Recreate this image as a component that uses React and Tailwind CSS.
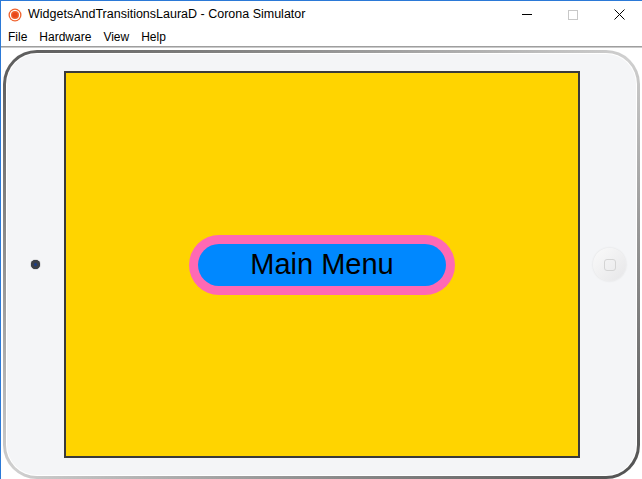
import React from 'react';

const TitleBar = () => (
  <div className="flex h-[28px] items-center bg-white">
    <svg width="14" height="14" viewBox="0 0 14 14" className="ml-[7px]">
      <circle cx="7" cy="7" r="6.5" fill="#f0622d" />
      <circle cx="7" cy="7" r="4.6" fill="none" stroke="#fff" strokeWidth="1.2" />
      <circle cx="7" cy="7" r="2.6" fill="#e8461a" />
    </svg>
    <span className="ml-[6px] text-[12.5px] text-black">WidgetsAndTransitionsLauraD - Corona Simulator</span>
    <div className="ml-auto flex h-full items-center">
      <div className="flex h-full w-[46px] items-center justify-center">
        <div className="h-px w-[10px] bg-black" />
      </div>
      <div className="flex h-full w-[46px] items-center justify-center">
        <div className="h-[10px] w-[10px] border border-[#c8c8c8]" />
      </div>
      <div className="flex h-full w-[46px] items-center justify-center">
        <svg width="11" height="11" viewBox="0 0 11 11">
          <path d="M0.5 0.5 L10.5 10.5 M10.5 0.5 L0.5 10.5" stroke="#000" strokeWidth="1" />
        </svg>
      </div>
    </div>
  </div>
);

const MenuBar = () => (
  <div className="flex h-[18px] items-center bg-white text-[12px] text-black">
    <span className="ml-[7px]">File</span>
    <span className="ml-[12px]">Hardware</span>
    <span className="ml-[12px]">View</span>
    <span className="ml-[12px]">Help</span>
  </div>
);

export default function App() {
  return (
    <div
      className="flex h-[479px] w-[642px] flex-col overflow-hidden border-l border-t border-[#2b79d7] bg-white"
      style={{ fontFamily: '"Liberation Sans", Arial, sans-serif' }}
    >
      <TitleBar />
      <MenuBar />
      <div className="h-[2px] bg-gradient-to-b from-[#8a8a8a] to-[#e0e0e0]" />
      <div className="flex flex-1 bg-white pl-[2px] pr-[2px] pt-[2px]">
        <div className="flex h-[429px] w-full rounded-[34px] bg-gradient-to-br from-[#5a5a5a] via-[#d0d0d0] to-[#505050] p-[3px]">
          <div className="flex flex-1 rounded-[31px] bg-white p-px">
            <div className="flex flex-1 items-center rounded-[30px] bg-[#f4f5f7]">
              <div className="flex w-[57px] justify-center">
                <div className="flex h-[9px] w-[9px] items-center justify-center rounded-full bg-[#3b4048] shadow-[0_0_1px_#000]">
                  <div className="h-[3px] w-[3px] rounded-full bg-[#1a3d8a]" />
                </div>
              </div>
              <div className="flex h-[387px] w-[516px] items-center justify-center border-2 border-[#3a3a3a] bg-[#ffd400]">
                <div className="flex h-[60px] w-[266px] items-center justify-center rounded-full bg-[#ff69b4] p-[9px]">
                  <div className="flex h-full w-full items-center justify-center rounded-full bg-[#0088ff]">
                    <span className="text-[29px] leading-none text-black">Main Menu</span>
                  </div>
                </div>
              </div>
              <div className="flex flex-1 justify-center pl-[3px]">
                <div className="flex h-[33px] w-[33px] items-center justify-center rounded-full bg-gradient-to-br from-[#fafafa] to-[#e6e6e8] shadow-[0_0_2px_#d8d8d8]">
                  <div className="h-[12px] w-[12px] rounded-[3px] border border-[#d4d4d4]" />
                </div>
              </div>
            </div>
          </div>
        </div>
      </div>
    </div>
  );
}
